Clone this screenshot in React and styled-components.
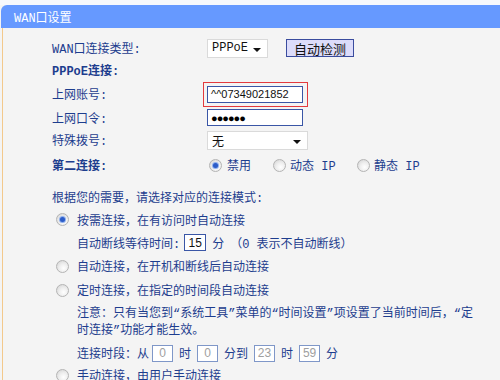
import React from "react";
import styled, { createGlobalStyle } from "styled-components";

const GlobalStyle = createGlobalStyle`
  html, body {
    margin: 0;
    padding: 0;
    background: #f4f4f4;
  }
  body {
    font-family: "Liberation Mono", "Noto Sans CJK SC", monospace;
    font-size: 12px;
    color: #1d3d8e;
  }
`;

const Page = styled.div`
  width: 500px;
  height: 380px;
  overflow: hidden;
  background: #f4f4f4;
`;

const TopStrip = styled.div`
  height: 5px;
  background: #f7f8fc;
`;

const Header = styled.div`
  height: 23px;
  margin-left: 1px;
  padding-left: 13px;
  display: flex;
  align-items: center;
  background: #6699ff;
  border-top-left-radius: 6px;
  color: #ffffff;
  font-size: 12px;
`;

const Body = styled.div`
  margin-left: 2px;
  padding: 9px 0 0 49px;
  height: 352px;
  border-left: 1px solid #f3c98c;
  box-sizing: border-box;
`;

const Row = styled.div`
  display: flex;
  align-items: center;
  height: ${p => p.h || 22}px;
  padding-left: ${p => p.indent || 0}px;
  margin-top: ${p => p.mt || 0}px;
  white-space: nowrap;
`;

const Label = styled.div`
  width: ${p => p.w || 155}px;
  flex-shrink: 0;
  font-weight: ${p => (p.bold ? "bold" : "normal")};
`;

const SelectBox = styled.div`
  position: relative;
  width: ${p => p.w}px;
  height: 19px;
  box-sizing: border-box;
  display: flex;
  align-items: center;
  padding-left: 4px;
  background: #ffffff;
  border: 1px solid #dadada;
  color: #111111;
`;

const Arrow = styled.span`
  position: absolute;
  right: 6px;
  top: 8px;
  width: 0;
  height: 0;
  border-left: 4px solid transparent;
  border-right: 4px solid transparent;
  border-top: 4px solid #111111;
`;

const Button = styled.div`
  margin-left: 18px;
  width: 68px;
  height: 18px;
  box-sizing: border-box;
  display: flex;
  align-items: center;
  justify-content: center;
  background: #dcdcfa;
  border: 1px solid #3a4c9e;
  color: #111111;
  font-family: "Noto Sans CJK SC", sans-serif;
  font-size: 13px;
`;

const Highlight = styled.div`
  margin-left: -4px;
  padding: 3px 4px 3px 3px;
  border: 1px solid #e33a3e;
`;

const Input = styled.div`
  width: ${p => p.w}px;
  height: 17px;
  box-sizing: border-box;
  display: flex;
  align-items: center;
  justify-content: ${p => (p.center ? "center" : "flex-start")};
  padding-left: ${p => (p.center ? 0 : 3)}px;
  margin-left: ${p => p.ml || 0}px;
  background: #ffffff;
  border: 1px solid ${p => (p.light ? "#7f97c8" : "#3a56a6")};
  color: ${p => (p.light ? "#a0a0a0" : "#111111")};
  font-family: "Liberation Sans", sans-serif;
  font-size: ${p => p.fs || 12}px;
`;

const Dots = styled.span`
  font-size: 11px;
  letter-spacing: -1px;
  color: #000000;
`;

const Radio = styled.span`
  width: 13px;
  height: 13px;
  flex-shrink: 0;
  box-sizing: border-box;
  border-radius: 50%;
  border: 1px solid #b4b4b4;
  background: radial-gradient(circle at 60% 65%, #ffffff 0%, #eeeeee 45%, #cfcfcf 100%);
  display: flex;
  align-items: center;
  justify-content: center;
  margin-left: ${p => p.ml || 0}px;
  &::after {
    content: "";
    display: ${p => (p.on ? "block" : "none")};
    width: 5px;
    height: 5px;
    border-radius: 50%;
    background: #2c5cc8;
    box-shadow: 0 0 0 1px #8fb0ee;
  }
`;

const Option = styled.div`
  display: flex;
  align-items: center;
  width: ${p => (p.w ? `${p.w}px` : "auto")};
  gap: ${p => p.gap || 5}px;
`;

const Text = styled.span`
  margin: 0 ${p => p.mx || 0}px;
`;

const Note = styled.div`
  padding-left: 25px;
  margin-top: 4px;
  line-height: 17px;
  white-space: nowrap;
`;

export default function App() {
  return (
    <Page>
      <GlobalStyle />
      <TopStrip />
      <Header>WAN口设置</Header>
      <Body>
        <Row>
          <Label>WAN口连接类型:</Label>
          <SelectBox w={61}>
            PPPoE
            <Arrow />
          </SelectBox>
          <Button>自动检测</Button>
        </Row>
        <Row>
          <Label bold>PPPoE连接:</Label>
        </Row>
        <Row h={26}>
          <Label>上网账号:</Label>
          <Highlight>
            <Input w={96} fs={11}>^^07349021852</Input>
          </Highlight>
        </Row>
        <Row h={21}>
          <Label>上网口令:</Label>
          <Input w={96}>
            <Dots>●●●●●●</Dots>
          </Input>
        </Row>
        <Row h={24}>
          <Label>特殊拨号:</Label>
          <SelectBox w={101}>
            <span style={{ fontFamily: "Noto Sans CJK SC" }}>无</span>
            <Arrow />
          </SelectBox>
        </Row>
        <Row h={26}>
          <Label bold>第二连接:</Label>
          <Option w={66}>
            <Radio on ml={2} />
            禁用
          </Option>
          <Option w={84} gap={4}>
            <Radio />
            动态 IP
          </Option>
          <Option gap={4}>
            <Radio />
            静态 IP
          </Option>
        </Row>
        <Row mt={8}>
          根据您的需要，请选择对应的连接模式:
        </Row>
        <Row h={23} indent={4}>
          <Option gap={8}>
            <Radio on />
            按需连接，在有访问时自动连接
          </Option>
        </Row>
        <Row h={23} indent={25}>
          自动断线等待时间:
          <Input w={22} center ml={4}>
            15
          </Input>
          <Text mx={6}>分</Text>
          （0 表示不自动断线）
        </Row>
        <Row h={24} indent={4}>
          <Option gap={8}>
            <Radio />
            自动连接，在开机和断线后自动连接
          </Option>
        </Row>
        <Row h={24} indent={4}>
          <Option gap={8}>
            <Radio />
            定时连接，在指定的时间段自动连接
          </Option>
        </Row>
        <Note>
          注意：只有当您到“系统工具”菜单的“时间设置”项设置了当前时间后，“定
          <br />
          时连接”功能才能生效。
        </Note>
        <Row h={24} mt={1} indent={25}>
          连接时段：从
          <Input w={21} light center ml={3}>
            0
          </Input>
          <Text mx={6}>时</Text>
          <Input w={21} light center>
            0
          </Input>
          <Text mx={6}>分到</Text>
          <Input w={21} light center>
            23
          </Input>
          <Text mx={6}>时</Text>
          <Input w={21} light center>
            59
          </Input>
          <Text mx={6}>分</Text>
        </Row>
        <Row h={20} indent={4}>
          <Option gap={8}>
            <Radio />
            手动连接，由用户手动连接
          </Option>
        </Row>
      </Body>
    </Page>
  );
}
